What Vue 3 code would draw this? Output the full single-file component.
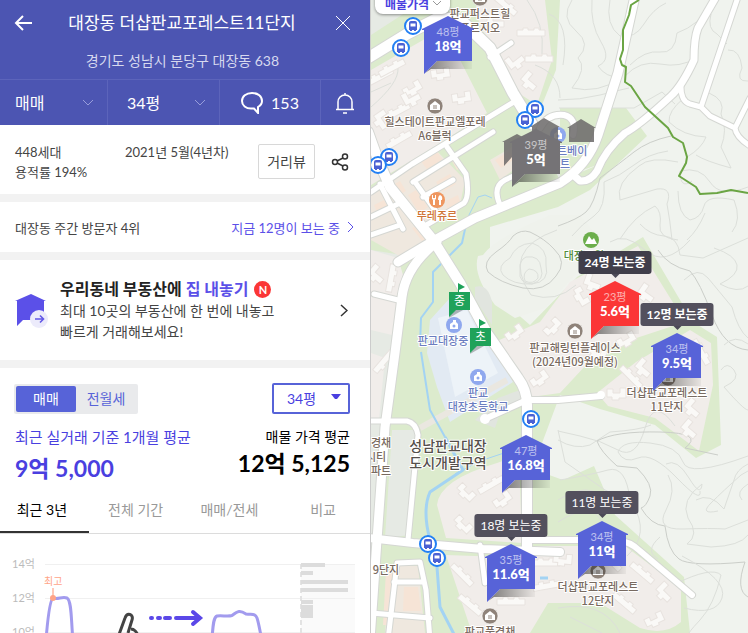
<script setup>
import { ref } from 'vue'

const trade = ref('매매')
const area = ref('34평')
const chartArea = ref('34평')
const mode = ref('매매')
const modes = ['매매', '전월세']
const tab = ref('최근 3년')
const tabs = ['최근 3년', '전체 기간', '매매/전세', '비교']

const markers = [
  { x: 448, y: 16, size: '48평', price: '18억', tone: 'blue' },
  { x: 536, y: 129, size: '39평', price: '5억', tone: 'gray' },
  { x: 615, y: 281, size: '23평', price: '5.6억', tone: 'red', viewers: '24명 보는중', strong: true },
  { x: 677, y: 333, size: '34평', price: '9.5억', tone: 'blue', viewers: '12명 보는중', strong: true, soft: true },
  { x: 526, y: 435, size: '47평', price: '16.8억', tone: 'blue' },
  { x: 511, y: 544, size: '35평', price: '11.6억', tone: 'blue', viewers: '18명 보는중', soft: true },
  { x: 602, y: 521, size: '34평', price: '11억', tone: 'blue', viewers: '11명 보는중', soft: true },
]
const schools = [
  { x: 449, y: 283, name: '중' },
  { x: 470, y: 319, name: '초' },
]
const mapLeft = 371

const buses = [[413, 26], [401, 48], [535, 109], [525, 120], [389, 157], [378, 165], [531, 419], [428, 544], [437, 558]]
const apartments = [[480, -2], [435, 106], [575, 331], [668, 378], [598, 571], [490, 616]]
const labels = [
  { x: 480, y: 18, lines: ['판교퍼스트힐', '푸르지오'] },
  { x: 435, y: 126, lines: ['힐스테이트판교엘포레', 'A6블럭'] },
  { x: 575, y: 352, lines: ['판교해링턴플레이스', '(2024년09월예정)'] },
  { x: 667, y: 397, lines: ['더샵판교포레스트', '11단지'] },
  { x: 598, y: 591, lines: ['더샵판교포레스트', '12단지'] },
  { x: 490, y: 636, lines: ['판교풍경채'] },
  { x: 386, y: 574, lines: ['9단지'] },
  { x: 376, y: 447, lines: ['풍경채', '시티', '아파트'] },
  { x: 437, y: 220, lines: ['뚜레쥬르'], kind: 'food' },
  { x: 443, y: 345, lines: ['판교대장중'], kind: 'school' },
  { x: 478, y: 397, lines: ['판교', '대장초등학교'], kind: 'school' },
  { x: 557, y: 155, lines: ['포레스트베이'], kind: 'school' },
  { x: 560, y: 168, lines: ['스트'], kind: 'school' },
  { x: 584, y: 260, lines: ['대장공원'], kind: 'park' },
]

const casings = [
  ['M368 58L407 34L440 17L462 21L490 48L513 93L532 124', 11],
  ['M368 132L377 157L390 187L433 240L460 283L487 333L518 378Q527 390 527 405V548', 10],
  ['M398 262L433 241L475 218L560 183Q588 165 598 135L618 73L635 -4', 9],
  ['M437 242Q406 266 402 297L395 353L385 427L377 540L370 640', 9],
  ['M368 538L413 543L483 549L560 552', 8],
  ['M530 540H615Q630 541 640 551L692 595', 6],
  ['M716 -3L698 28Q694 38 694 60Q682 86 671 96Q640 125 625 133Q605 150 597 171Q590 182 580 181L572 174', 7],
  ['M738 -3L701 107M681 83Q680 101 690 104L701 107L710 116L735 128Q736 137 750 146M735 128L750 98', 5],
  ['M371 192L412 164L517 100M413 182L493 132M415 182L437 213M447 147L466 174Q470 196 464 203L423 227M423 197L453 180M371 217L400 203M380 184L403 229M371 235L400 225M500 205Q492 187 505 180L535 166', 5],
  ['M540 128Q548 113 564 115Q577 118 573 135', 6],
  ['M527 400H558L601 396M527 400L487 418', 6],
  ['M368 421H407Q416 423 418 435L408 540M374 294L398 300', 5],
  ['M480 545L485 583M397 563L420 562L426 590L430 640M397 563L388 640M394 582H424M371 613L430 618M490 57L511 43', 5],
]

const contours = [
  'M572 0Q560 18 576 31T578 58Q588 68 572 88Q598 94 621 78',
  'M592 0Q590 24 601 42T598 66Q605 77 621 78', 'M610 0Q605 25 620 36Q635 39 644 24T666 3',
  'M630 65Q645 50 660 52T677 33Q699 25 712 4', 'M625 76Q640 60 660 64T696 58',
  'M558 100Q580 100 600 95T629 88', 'M559 108H634L662 92L675 104',
  'M711 14Q707 29 717 34L727 44M728 50Q740 49 742 68Q735 82 748 81',
  'M684 98Q668 111 669 122Q683 136 706 137Q702 148 687 157',
  'M709 93Q726 100 721 114Q728 130 721 147L731 168Q705 161 696 155',
  'M671 136Q648 141 634 152T600 178Q594 205 586 212T558 226',
  'M668 151Q648 154 634 165T604 182Q606 208 594 216T572 236',
  'M678 162Q650 156 639 166Q615 183 620 200L657 189Q673 187 667 204Q670 220 672 240',
  'M678 191Q678 215 690 220Q701 218 704 206T734 200Q742 220 732 232',
  'M692 181Q680 190 680 171Q700 166 710 182T748 187',
  'M620 239Q635 215 655 206Q662 212 660 225T678 240', 'M610 242Q625 232 645 250T690 240',
  'M687 240Q698 230 705 213', 'M714 248Q735 255 737 265T720 284Q738 294 748 286',
  'M684 280Q698 266 708 278T732 307Q738 330 748 338',
  'M658 250Q668 266 690 271Q700 282 712 315T748 350',
  'M640 224Q650 235 664 236T680 255L703 258L748 238', 'M721 370Q727 361 734 370T724 387Q744 410 748 410',
  'M724 345Q735 334 748 344', 'M558 431L580 436Q600 440 618 450T645 428T675 426',
  'M558 440Q575 450 590 445L610 432Q640 430 651 425',
  'M597 441Q615 431 660 432T685 448L718 455M597 441Q600 451 617 466L637 468Q654 485 650 496T641 508Q651 525 665 526Q668 551 679 559T745 562Q735 590 748 597',
  'M618 452Q622 440 650 443T683 462T748 456M618 452Q624 464 638 458T677 478T700 491',
  'M666 464Q677 458 689 478T702 484Q680 500 688 518Q700 535 687 544L711 547Q740 546 748 535',
  'M668 475Q677 490 666 510T683 529T725 529L748 520', 'M696 500Q710 492 724 509L734 480Q736 470 748 464',
  'M718 511Q699 515 711 503T741 475L748 471', 'M748 484Q735 492 742 500',
  'M558 430L565 462L605 490L632 503Q651 534 627 556',
  'M658 559Q644 551 660 537M682 556Q728 580 722 598T684 608M675 584Q712 566 721 575Q714 605 700 620T690 633M558 608Q604 600 620 633M570 617L602 633',
  'M560 480Q590 475 608 470T630 500M558 500Q590 480 604 500M558 522Q600 495 604 533',
  'M527 0Q545 24 542 54M549 14Q570 22 563 65M371 107Q399 83 398 68M371 92L391 83M535 65Q560 74 560 98',
  'M557 230Q500 250 531 295Q556 303 576 285',
]
const hill = [
  'M530 232Q545 239 554 249Q568 262 556 276Q545 292 523 288Q500 283 488 272Q482 262 496 252Q509 243 513 236Q521 229 530 232Z',
  'M532 243Q548 248 546 265Q550 282 532 284Q513 285 503 275Q496 266 510 258Q516 244 532 243Z',
  'M526 257Q540 255 541 268Q545 280 532 284Q518 283 520 271Q519 260 526 257Z',
  'M529 269Q539 270 538 278Q533 285 525 281Q522 273 529 269Z',
]

/* Each building: x, y, rotation, outline variant */
const buildings = [
  [380, 77, -28, 0], [392, 68, -28, 0], [413, 89, -30, 1], [441, 74, -8, 1], [462, 98, -8, 1], [397, 112, -28, 0], [412, 98, -28, 2],
  [382, 121, 55, 2], [399, 140, -30, 0], [496, 22, 0, 2], [516, 61, -38, 2], [531, 33, 0, 0], [539, 59, 0, 0], [530, 82, 40, 2], [505, 5, 40, 0],
  [391, 278, 100, 0], [377, 275, 40, 2], [384, 361, 130, 0], [515, 333, -35, 1], [540, 379, -35, 1], [553, 327, -45, 1],
  [593, 283, 20, 2], [581, 297, 60, 1], [647, 294, 35, 2], [627, 340, -30, 1], [597, 353, 30, 1], [644, 369, 40, 2], [617, 394, 0, 1],
  [631, 377, 45, 0], [693, 409, 40, 2], [701, 352, 60, 0], [690, 430, 40, 2], [466, 493, 45, 1], [503, 500, -35, 1], [463, 525, 45, 1], [491, 485, -30, 0],
  [462, 575, 45, 0], [470, 605, 40, 0], [511, 602, 0, 0], [546, 563, 0, 0], [547, 586, -10, 0], [563, 560, 5, 1], [642, 573, 40, 0],
  [665, 593, 45, 2], [624, 603, 40, 0], [655, 620, -25, 1], [610, 560, 45, 0],
]
const shapes = [
  'M-14 -3H-8V-5H-3V-3H3V-5H8V-3H14V3H-14Z',
  'M-10 -5H-4V-1H3V-6H9V4H2V6H-5V3H-10Z',
  'M-9 -8H-3V-1H8V5H2V8H-4V4H-9Z',
]
</script>

<template>
  <div class="layout">
    <main class="panel">
      <header class="head">
        <div class="title-row">
          <button class="icon-btn" aria-label="뒤로">
            <svg width="20" height="18" viewBox="0 0 20 18"><path d="M9 2L2 9L9 16M2 9H18" /></svg>
          </button>
          <h1>대장동 더샵판교포레스트11단지</h1>
          <button class="icon-btn" aria-label="닫기">
            <svg class="thin" width="16" height="16" viewBox="0 0 16 16"><path d="M1 1L15 15M15 1L1 15" /></svg>
          </button>
        </div>
        <p class="address">경기도 성남시 분당구 대장동 638</p>
        <div class="filters">
          <label class="pick">
            <select v-model="trade" aria-label="거래 유형"><option>매매</option><option>전세</option></select>
            <svg width="12" height="8" viewBox="0 0 12 8"><path d="M1 1L6 6L11 1" /></svg>
          </label>
          <label class="pick size">
            <select v-model="area" aria-label="평형"><option>34평</option><option>25평</option></select>
            <svg width="12" height="8" viewBox="0 0 12 8"><path d="M1 1L6 6L11 1" /></svg>
          </label>
          <button class="talk">
            <svg width="22" height="22" viewBox="0 0 22 22"><path d="M11 1C5 1 1 4.500 1 9C1 13.500 5 16.500 10 16.500H13L17 21V15C19.500 13.600 21 11.500 21 9C21 4.500 17 1 11 1Z" /></svg>
            <span>153</span>
          </button>
          <button class="alarm" aria-label="알림">
            <svg width="20" height="22" viewBox="0 0 20 22"><path d="M3 17V10C3 6 6 3 10 3S17 6 17 10V17M1 17.500H19M10 1V3M8 21H12" /></svg>
          </button>
        </div>
      </header>

      <section class="facts">
        <p>448세대<br />용적률 194%</p>
        <p class="built">2021년 5월(4년차)</p>
        <button class="street">거리뷰</button>
        <button class="share" aria-label="공유">
          <svg width="18" height="18" viewBox="0 0 18 18"><path d="M6 8L12 5M6 10L12 13" /><circle cx="4" cy="9" r="2.500" /><circle cx="14" cy="3.500" r="2.500" /><circle cx="14" cy="14.500" r="2.500" /></svg>
        </button>
      </section>

      <section class="visitors">
        <span>대장동 주간 방문자 4위</span>
        <a href="#viewers">지금 12명이 보는 중
          <svg width="7" height="12" viewBox="0 0 7 12"><path d="M1 1L6 6L1 11" /></svg>
        </a>
      </section>

      <a class="promo" href="#sell">
        <svg class="promo-icon" width="34" height="36" viewBox="0 0 34 36">
          <path d="M16 1L31 8H29V27H8L2 33V8H0Z" fill="#5b50e8" />
          <circle cx="24" cy="26" r="9" fill="#ecebfb" />
          <path d="M20 26H28M25 22.500L28.500 26L25 29.500" fill="none" stroke="#6257e6" stroke-width="1.600" />
        </svg>
        <span class="promo-copy">
          <strong>우리동네 부동산에 <em>집 내놓기</em><i>N</i></strong>
          <span>최대 10곳의 부동산에 한 번에 내놓고<br />빠르게 거래해보세요!</span>
        </span>
        <svg class="more" width="8" height="13" viewBox="0 0 8 13"><path d="M1 1L7 6.500L1 12" /></svg>
      </a>

      <section class="prices">
        <div class="controls">
          <div class="toggle">
            <button v-for="m in modes" :key="m" :class="{ on: mode === m }" :aria-pressed="mode === m" @click="mode = m">{{ m }}</button>
          </div>
          <label class="area-box">
            <select v-model="chartArea" aria-label="시세 평형"><option>34평</option><option>25평</option></select>
            <svg width="10" height="6" viewBox="0 0 10 6"><path d="M0 0H10L6 5H4Z" /></svg>
          </label>
        </div>
        <div class="averages">
          <div class="recent"><h2>최근 실거래 기준 1개월 평균</h2><strong>9억 5,000</strong></div>
          <div class="asking"><h2>매물 가격 평균</h2><strong>12억 5,125</strong></div>
        </div>
      </section>

      <div class="tabs" role="tablist">
        <button v-for="t in tabs" :key="t" role="tab" :aria-selected="tab === t" :class="{ on: tab === t }" @click="tab = t">{{ t }}</button>
      </div>

      <svg class="chart" viewBox="0 534 370 160" preserveAspectRatio="xMinYMin slice" role="img" aria-label="실거래가 추이">
        <rect x="301" y="564" width="54" height="130" fill="#fafafa" />
        <path d="M45 564.500H355M45 598.500H355M45 632.500H355" stroke="#f0f0f0" />
        <path d="M301 564V694" stroke="#e3e3e3" stroke-width="2" stroke-dasharray="5 3" />
        <path d="M301 563h24v4h-24zM301 571h12v4h-12zM301 580h47v4h-47zM301 588h47v4h-47zM301 600h12v4h-12zM301 605h12v13h-12z" fill="#dcdcdc" />
        <g class="axis"><text x="12" y="568">14억</text><text x="12" y="602">12억</text><text x="12" y="636">10억</text></g>
        <text class="peak" x="44" y="585">최고</text>
        <path d="M53 588V598" stroke="#ffc9b8" stroke-width="2" />
        <g fill="none" stroke="#a29bee" stroke-width="3">
          <path d="M46 640C48 615 50 600 53 598C58 600 62 596 67 598C72 601 71 622 73 640" />
          <path d="M212 640C213 622 214 617 217 616C222 615 227 617 232 615.500C238 611 240 610 246 614C252 615 255 613 257 618C259 624 260 632 262 640" />
        </g>
        <circle cx="53" cy="598" r="3" fill="#ffa488" />
        <path d="M117 640L125 618C127 612 134 614 132 620L128 633M131 629C134 629 137 632 138 636" fill="none" stroke="#444" stroke-width="3" />
        <path d="M151 618h1M158 618h2M165 618h5M176 618h23M193 612l7 6l-7 6" fill="none" stroke="#5b48e8" stroke-width="4" stroke-linecap="round" />
      </svg>
    </main>

    <section class="map" aria-label="지도">
      <svg class="base" viewBox="371 0 377 633" preserveAspectRatio="xMinYMin slice">
        <rect x="371" width="1200" height="1200" fill="#f0f3ee" />
        <g fill="#dcebcd">
          <path d="M371 0H560L556 70L532 130L560 180L480 215L435 240L371 280Z" />
          <path d="M371 240L440 238L480 216L600 164L560 178V108H626L647 136L590 190L558 207L490 227V290L530 325L577 277L643 237L693 322L717 337L721 445L696 458L655 425L600 409L560 395L532 470V633H371Z" />
          <path d="M530 468L563 480L594 466L615 515L684 577L690 633H530Z" />
        </g>
        <path d="M371 0H425L371 35ZM371 250L402 255L395 300L384 440L376 540V633H371ZM392 430L416 430L410 535L385 538Z" fill="#e6eae4" />
        <path d="M483 255Q495 238 550 215L580 215L600 240L575 275L545 308L515 318L495 305Q472 275 478 256Z" fill="#eff2ec" />
        <g fill="#f1edea">
          <path d="M371 70L430 36L455 50L487 113L437 145L371 185ZM475 0H545L552 60L537 105L520 94L497 48L480 28ZM371 250L398 258L403 275L392 335L371 330ZM371 353L385 358L379 420L371 420Z" />
          <path d="M495 342L540 322L570 282L638 246L685 322L600 350L560 393L531 397Z" />
          <path d="M597 393L636 362L690 330L711 343L713 385L699 451L655 418L608 406Z" />
          <path d="M519 455L497 463Q439 480 437 505L446 538L522 543ZM446 555L533 558L535 575L548 603L530 633H472ZM535 546H625L681 588V622Q665 636 640 628L600 603H535Z" />
        </g>
        <path d="M380 182L434 148L465 180L460 205L420 230L437 242L410 262L371 240V194ZM490 160L512 147L523 163L500 180ZM390 565L418 566L425 633H385Z" fill="#efe8df" />
        <g fill="#f6e4d6">
          <path d="M386 189l14-8l6 10l-14 8ZM420 160l16-10l9 13l-16 9ZM436 182l14-8l6 10l-14 8ZM452 161l6-4l6 9l-7 4ZM408 195l8-5l12 17l-9 6ZM446 201l12-6l2 7l-13 8ZM374 205l10-5l5 9l-11 5ZM412 228l12-4l8 12l-10 5ZM495 160l14-9l6 8l-14 9ZM386 570h8l-5 55h-6ZM404 587h14l3 24h-18Z" />
        </g>
        <path d="M450 298L430 320L427 353L437 387L450 422L513 382L470 305Z" fill="#e2eaf3" />
        <path d="M438 318L467 310L498 373L455 397Z" fill="#edf3f8" />
        <path d="M475 287Q488 283 492 302V325L475 299ZM498 398L520 390L525 397L500 413L495 428L475 420Z" fill="#e1e5df" />
        <path d="M420 428L507 380" stroke="#eae7e0" stroke-width="6" />
        <g fill="none" stroke="#a3d3f3" stroke-width="2" stroke-linejoin="round">
          <path d="M467 220L462 243L433 272V302L421 318L420 345" /><path d="M421 352L430 410L445 437" /><path d="M445 437L463 470L430 492Q422 510 430 540L437 567L440 607L457 640" stroke-width="3" />
          <path d="M455 474L480 461L507 452M465 223L478 197L485 195L492 198" stroke-width="1" /><path d="M540 578h8" stroke-width="3" />
        </g>
        <path v-for="(c, i) in contours" :key="'c' + i" :d="c" class="contour" :class="{ bold: i === 10 || i === 26 || i === 20 }" />
        <path v-for="(h, i) in hill" :key="'h' + i" :d="h" class="contour" :class="{ bold: i === 0 }" />
        <path v-for="(b, i) in buildings" :key="'b' + i" :d="shapes[b[3]]" class="building" :transform="`translate(${b[0]} ${b[1]}) rotate(${b[2]})`" />
        <g class="roads">
          <path v-for="(r, i) in casings" :key="'s' + i" :d="r[0]" stroke="#d5d7d3" :stroke-width="r[1] + 2" />
          <path v-for="(r, i) in casings" :key="'r' + i" :d="r[0]" stroke="#fff" :stroke-width="r[1]" />
          <circle cx="485" cy="419" r="5" fill="#fff" /><circle cx="601" cy="395" r="4" fill="#fff" />
        </g>
        <path d="M639 0L631 5L629 15L623 30V50L620 59L622 65L626 67L625 82L631 86L645 107L668 128L673 137L683 143L687 157L686 163L679 176L696 187L700 194L717 193L731 190L748 193" fill="none" stroke="#6ba544" stroke-width="2" stroke-linejoin="round" />

        <g v-for="(p, i) in apartments" :key="'a' + i" :transform="`translate(${p[0]} ${p[1]})`">
          <circle r="8" fill="#8f837a" stroke="#fff" stroke-opacity=".6" /><path d="M-5 -1L0 -5L5 -1V4H-5Z" fill="#fff" /><path d="M-2 0H2M-2 2H2" stroke="#8f837a" />
        </g>
        <g transform="translate(437 200)"><circle r="8" fill="#ef965f" /><path d="M-3 0V5M3 0V5" stroke="#fff" stroke-width="2" /><path d="M-5 -5V-1Q-3 1 -1 -1V-5H-2V-2H-4V-5ZM3 -5Q6 -4 5 0H1Q1 -4 3 -5Z" fill="#fff" /></g>
        <g transform="translate(591 240)"><circle r="8" fill="#6cae4c" /><path d="M-6 4L-2 -4L1 0L3 -2L6 4Z" fill="#fff" /></g>
        <g v-for="p in [[454, 325], [478, 377], [558, 135]]" :key="p[0]" :transform="`translate(${p[0]} ${p[1]})`">
          <circle r="8" fill="#8fa8ee" /><path d="M-4 4V-1L-1 -3V-5H2V-3L4 -1V4Z" fill="#fff" /><circle cy="1" r="1.500" fill="#8fa8ee" />
        </g>

        <g v-for="(l, i) in labels" :key="'l' + i" class="label" :class="l.kind">
          <text v-for="(line, n) in l.lines" :key="line" :x="l.x" :y="l.y + n * 14">{{ line }}</text>
        </g>
        <g class="label district"><text x="448" y="451">성남판교대장</text><text x="448" y="468">도시개발구역</text></g>

        <g v-for="(b, i) in buses" :key="'bus' + i" :transform="`translate(${b[0]} ${b[1]})`">
          <circle r="8" fill="#fff" stroke="#2380f4" stroke-width="2" />
          <path d="M-4 -3Q-4 -5 -2 -5H2Q4 -5 4 -3V4H3V5H1V4H-1V5H-3V4H-4Z" fill="#4a61d3" /><path d="M-2.500 -2.500H2.500V.500H-2.500Z" fill="#fff" />
        </g>
        <g fill="#6b6868" fill-opacity=".85">
          <path d="M517 134L532 142H529V157H512L504 166V142H502Z" /><path d="M544 118L560 127H558V142H532V127H530Z" /><path d="M581 119L596 128H594V142H569V128H567Z" />
        </g>
      </svg>

      <button class="chip">매물가격
        <svg width="10" height="7" viewBox="0 0 10 7"><path d="M1 1L5 5L9 1" /></svg>
      </button>

      <button v-for="s in schools" :key="s.name" class="school-flag" :style="{ left: s.x - mapLeft + 'px', top: s.y + 'px' }">
        <svg width="22" height="35" viewBox="0 0 22 35"><path d="M2 27H14L0 35Z" fill="#000" fill-opacity=".25" /><path d="M9 9V0L16 4L10 7V9H21V27H7L0 34V9Z" fill="#1fa25a" /></svg>
        <span>{{ s.name }}</span>
      </button>

      <button v-for="m in markers" :key="m.x" class="marker" :class="m.tone" :style="{ left: m.x - mapLeft + 'px', top: m.y + 'px' }">
        <svg width="52" height="58" viewBox="0 0 52 58">
          <defs>
            <linearGradient :id="'shade' + m.x"><stop offset="0" stop-opacity=".5" /><stop offset="1" stop-opacity=".04" /></linearGradient>
          </defs>
          <path d="M15 45H50V53H9L3 57Z" :fill="`url(#shade${m.x})`" />
          <path d="M26 0L52 13V14H50V45H15L2 58V14H0V13Z" fill="currentColor" />
        </svg>
        <span class="size-text">{{ m.size }}</span>
        <strong>{{ m.price }}</strong>
        <span v-if="m.viewers" class="viewers" :class="{ strong: m.strong, soft: m.soft }">{{ m.viewers }}</span>
      </button>
    </section>
  </div>
</template>

<style>
body { overflow: hidden; }
</style>

<style scoped>
* { box-sizing: border-box; }
.layout { display: flex; height: 100vh; font-family: Lato, "Noto Sans CJK KR", sans-serif; color: #444; }
button, select { font: inherit; color: inherit; background: none; border: 0; padding: 0; margin: 0; cursor: pointer; }
h1, h2, p { margin: 0; font-weight: 400; }
a { color: inherit; text-decoration: none; }
svg { display: block; }
select { appearance: none; outline: 0; }

.panel { flex: 0 0 371px; border-right: 1px solid #ccc; overflow: hidden; display: flex; flex-direction: column; background: #fff; }
.panel > * { flex-shrink: 0; }
.head { background: #4c55b2; color: #fff; }
.title-row { display: flex; align-items: center; height: 45px; padding: 0 19px 0 14px; }
h1 { flex: 1; padding-right: 5px; font-size: 17px; line-height: 24px; text-align: center; }
.icon-btn svg { fill: none; stroke: #fff; stroke-width: 2; }
.icon-btn svg.thin { stroke-width: 1; }
.address { height: 34px; font-size: 14px; line-height: 32px; text-align: center; padding-right: 5px; color: #d7d9ef; }
.filters { display: grid; grid-template-columns: 107fr 112fr 101fr 50fr; height: 46px; border-top: 1px solid #5c64bb; font-size: 16px; }
.filters > * + * { border-left: 1px solid #5c64bb; }
.pick { display: grid; align-items: center; }
.pick select, .pick svg, .area-box select, .area-box svg { grid-area: 1 / 1; }
.pick select { height: 45px; padding-left: 15px; }
.pick.size select { padding-left: 19px; }
.pick svg { justify-self: end; margin-right: 13px; fill: none; stroke: #989ddb; pointer-events: none; }
.talk { display: flex; align-items: center; justify-content: center; gap: 8px; }
.talk svg, .alarm svg { fill: none; stroke: #fff; stroke-width: 2; }
.alarm { display: grid; place-items: center; padding-right: 2px; }
.alarm svg { stroke-width: 1.5; }

.facts { display: flex; height: 77px; padding: 17px 21px 0 15px; border-bottom: 8px solid #f2f2f2; font-size: 13px; line-height: 20px; }
.facts p { flex: 0 0 110px; }
.facts .built { flex: 1 0 110px; }
.street { width: 57px; height: 35px; margin-top: 2px; border: 1px solid #d8d8d8; border-radius: 2px; font-size: 14px; }
.share { height: 35px; margin: 2px 0 0 16px; }
.share svg { fill: none; stroke: #333; stroke-width: 1.5; }

.visitors { display: flex; align-items: center; justify-content: space-between; height: 58px; padding: 0 16px 0 15px; border-bottom: 8px solid #f2f2f2; font-size: 13px; }
.visitors a { display: flex; align-items: center; gap: 7px; color: #5b50e8; }
.visitors svg { fill: none; stroke: #5b50e8; }

.promo { display: flex; align-items: center; height: 108px; padding: 0 22px 0 15px; border-bottom: 8px solid #f2f2f2; }
.promo-icon { margin-top: 2px; }
.promo-copy { flex: 1; margin-left: 11px; font-size: 14px; line-height: 21px; }
.promo-copy strong { display: flex; align-items: center; gap: 4px; font-size: 16px; line-height: 22px; color: #222; }
.promo-copy em { font-style: normal; color: #5b50e8; }
.promo-copy i { width: 17px; height: 17px; margin-left: 2px; border-radius: 50%; background: #fb3636; color: #fff; font-size: 11px; line-height: 17px; font-style: normal; text-align: center; }
.more { fill: none; stroke: #333; stroke-width: 1.5; }

.prices { padding: 15px 20px 0 14px; }
.controls { display: flex; align-items: center; justify-content: space-between; }
.toggle { display: flex; padding: 2px; border-radius: 2px; background: #e9eaec; font-size: 14px; }
.toggle button { width: 60px; height: 26px; border-radius: 2px; color: #5763d8; line-height: 26px; }
.toggle .on { background: #5763d8; color: #fff; }
.area-box { display: grid; align-items: center; width: 78px; height: 31px; border: 2px solid #5763d8; border-radius: 2px; color: #4a3fe0; font-size: 14px; }
.area-box select { height: 27px; padding-left: 13px; }
.area-box svg { justify-self: end; margin: 0 7px 4px 0; fill: #4a3fe0; pointer-events: none; }
.averages { display: flex; justify-content: space-between; padding-top: 12px; }
.averages strong { display: block; font-size: 23px; line-height: 30px; }
.averages h2 { line-height: 22px; }
.recent { padding-left: 1px; color: #4a3fe0; }
.recent h2 { padding-bottom: 5px; font-size: 15px; }
.asking { color: #000; text-align: right; }
.asking h2 { font-size: 14px; }

.tabs { display: grid; grid-template-columns: repeat(4, 1fr); margin-left: -5px; height: 51px; border-bottom: 1px solid #dcdcdc; font-size: 14px; color: #999; }
.tabs button { padding-top: 4px; border-bottom: 2px solid transparent; }
.tabs .on { color: #000; border-color: #333; }
.chart { width: 100%; height: 160px; }
.axis text { font-size: 11px; fill: #bbb; }
.peak { font-size: 10px; fill: #ffa488; }

.map { position: relative; flex: 1; min-width: 0; overflow: hidden; background: #f0f3ee; }
.base { width: 100%; height: 100%; }
.contour { fill: none; stroke: #dcdfda; stroke-width: 1; }
.contour.bold { stroke: #cbcec9; }
.building { fill: #faf9f7; stroke: #e8e3df; }
.roads path { fill: none; stroke-linejoin: round; stroke-linecap: round; }
.label text { font-size: 11px; font-weight: 500; fill: #786a60; stroke: #fff; stroke-width: 2; stroke-linejoin: round; paint-order: stroke; text-anchor: middle; font-family: "Noto Sans CJK KR", sans-serif; }
.label.food text { fill: #cf7435; }
.label.school text { fill: #6b7dc0; }
.label.park text { fill: #548d3c; }
.label.district text { font-size: 14px; fill: #55504c; }

.chip { position: absolute; left: 4px; top: -11px; display: flex; align-items: center; gap: 3px; height: 25px; padding: 4px 8px 0 10px; border-radius: 8px; background: #fff; box-shadow: 0 1px 3px rgba(0, 0, 0, .4); color: #4a3fe0; font-size: 12px; font-weight: 700; white-space: nowrap; }
.chip svg { fill: none; stroke: #999; }
.school-flag { position: absolute; width: 22px; height: 35px; color: #fff; font-size: 12px; line-height: 18px; }
.school-flag span { position: absolute; left: 0; top: 9px; width: 21px; text-align: center; }
.marker { position: absolute; width: 52px; height: 58px; margin-left: -26px; color: #5763d8; }
.marker svg { position: absolute; left: 0; top: 0; }
.marker .size-text, .marker strong { position: relative; display: block; color: #fff; text-align: center; }
.marker .size-text { margin-top: -12px; font-size: 11px; line-height: 14px; opacity: .6; }
.marker strong { font-size: 13px; line-height: 14px; font-weight: 900; }
.marker.red { color: #fb3636; }
.marker.gray { color: #757376; }
.viewers { position: absolute; left: 50%; bottom: 65px; transform: translateX(-50%); height: 23px; padding: 0 6px; border-radius: 3px; background: #403e4a; color: #fff; font-size: 12px; line-height: 23px; white-space: nowrap; }
.viewers.strong { font-weight: 700; }
.viewers.soft { background: #53505d; }
.viewers::after { content: ""; position: absolute; left: 50%; top: 100%; margin-left: -4px; border: 4px solid transparent; border-top-color: #4b4956; border-bottom: 0; }
</style>
